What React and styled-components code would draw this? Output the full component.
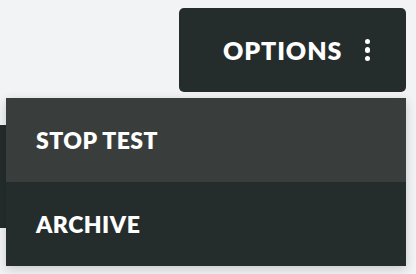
import React from "react";
import styled, { createGlobalStyle } from "styled-components";

const Global = createGlobalStyle`
  html, body { margin: 0; padding: 0; }
  body {
    background: #f2f3f5;
    font-family: "Lato", "Liberation Sans", sans-serif;
    width: 416px;
    height: 274px;
    overflow: hidden;
  }
`;

const Page = styled.div`
  position: relative;
  width: 416px;
  height: 274px;
  display: flex;
  flex-direction: column;
`;

const Header = styled.div`
  display: flex;
  justify-content: flex-end;
  padding: 8px 10px 0 0;
`;

const OptionsButton = styled.button`
  display: flex;
  align-items: center;
  height: 84px;
  width: 227px;
  box-sizing: border-box;
  padding: 0 36px 0 44px;
  background: #252c2c;
  border: none;
  border-radius: 5px;
  color: #ffffff;
  font-family: "Lato", "Liberation Sans", sans-serif;
  font-weight: 800;
  font-size: 25px;
  letter-spacing: 0.9px;
  cursor: pointer;
`;

const Dots = styled.span`
  display: flex;
  flex-direction: column;
  gap: 3px;
  margin-left: auto;
`;

const Dot = styled.span`
  width: 5.5px;
  height: 5.5px;
  border-radius: 50%;
  background: #ffffff;
`;

const BackCard = styled.div`
  margin-top: 33px;
  height: 103px;
  width: 400px;
  background: #252c2c;
`;

const Menu = styled.div`
  position: absolute;
  left: 6px;
  top: 98px;
  width: 400px;
  display: flex;
  flex-direction: column;
  box-shadow: 0 3px 10px rgba(0, 0, 0, 0.18);
`;

const Item = styled.div`
  height: 84px;
  display: flex;
  align-items: center;
  padding-left: 30px;
  background: ${(p) => (p.$active ? "#393e3c" : "#252c2c")};
  color: #ffffff;
  font-weight: 800;
  font-size: 23px;
  letter-spacing: 0.5px;
`;

export default function App() {
  return (
    <>
      <Global />
      <Page>
        <Header>
          <OptionsButton>
            OPTIONS
            <Dots>
              <Dot />
              <Dot />
              <Dot />
            </Dots>
          </OptionsButton>
        </Header>
        <BackCard />
        <Menu>
          <Item $active>STOP TEST</Item>
          <Item>ARCHIVE</Item>
        </Menu>
      </Page>
    </>
  );
}
